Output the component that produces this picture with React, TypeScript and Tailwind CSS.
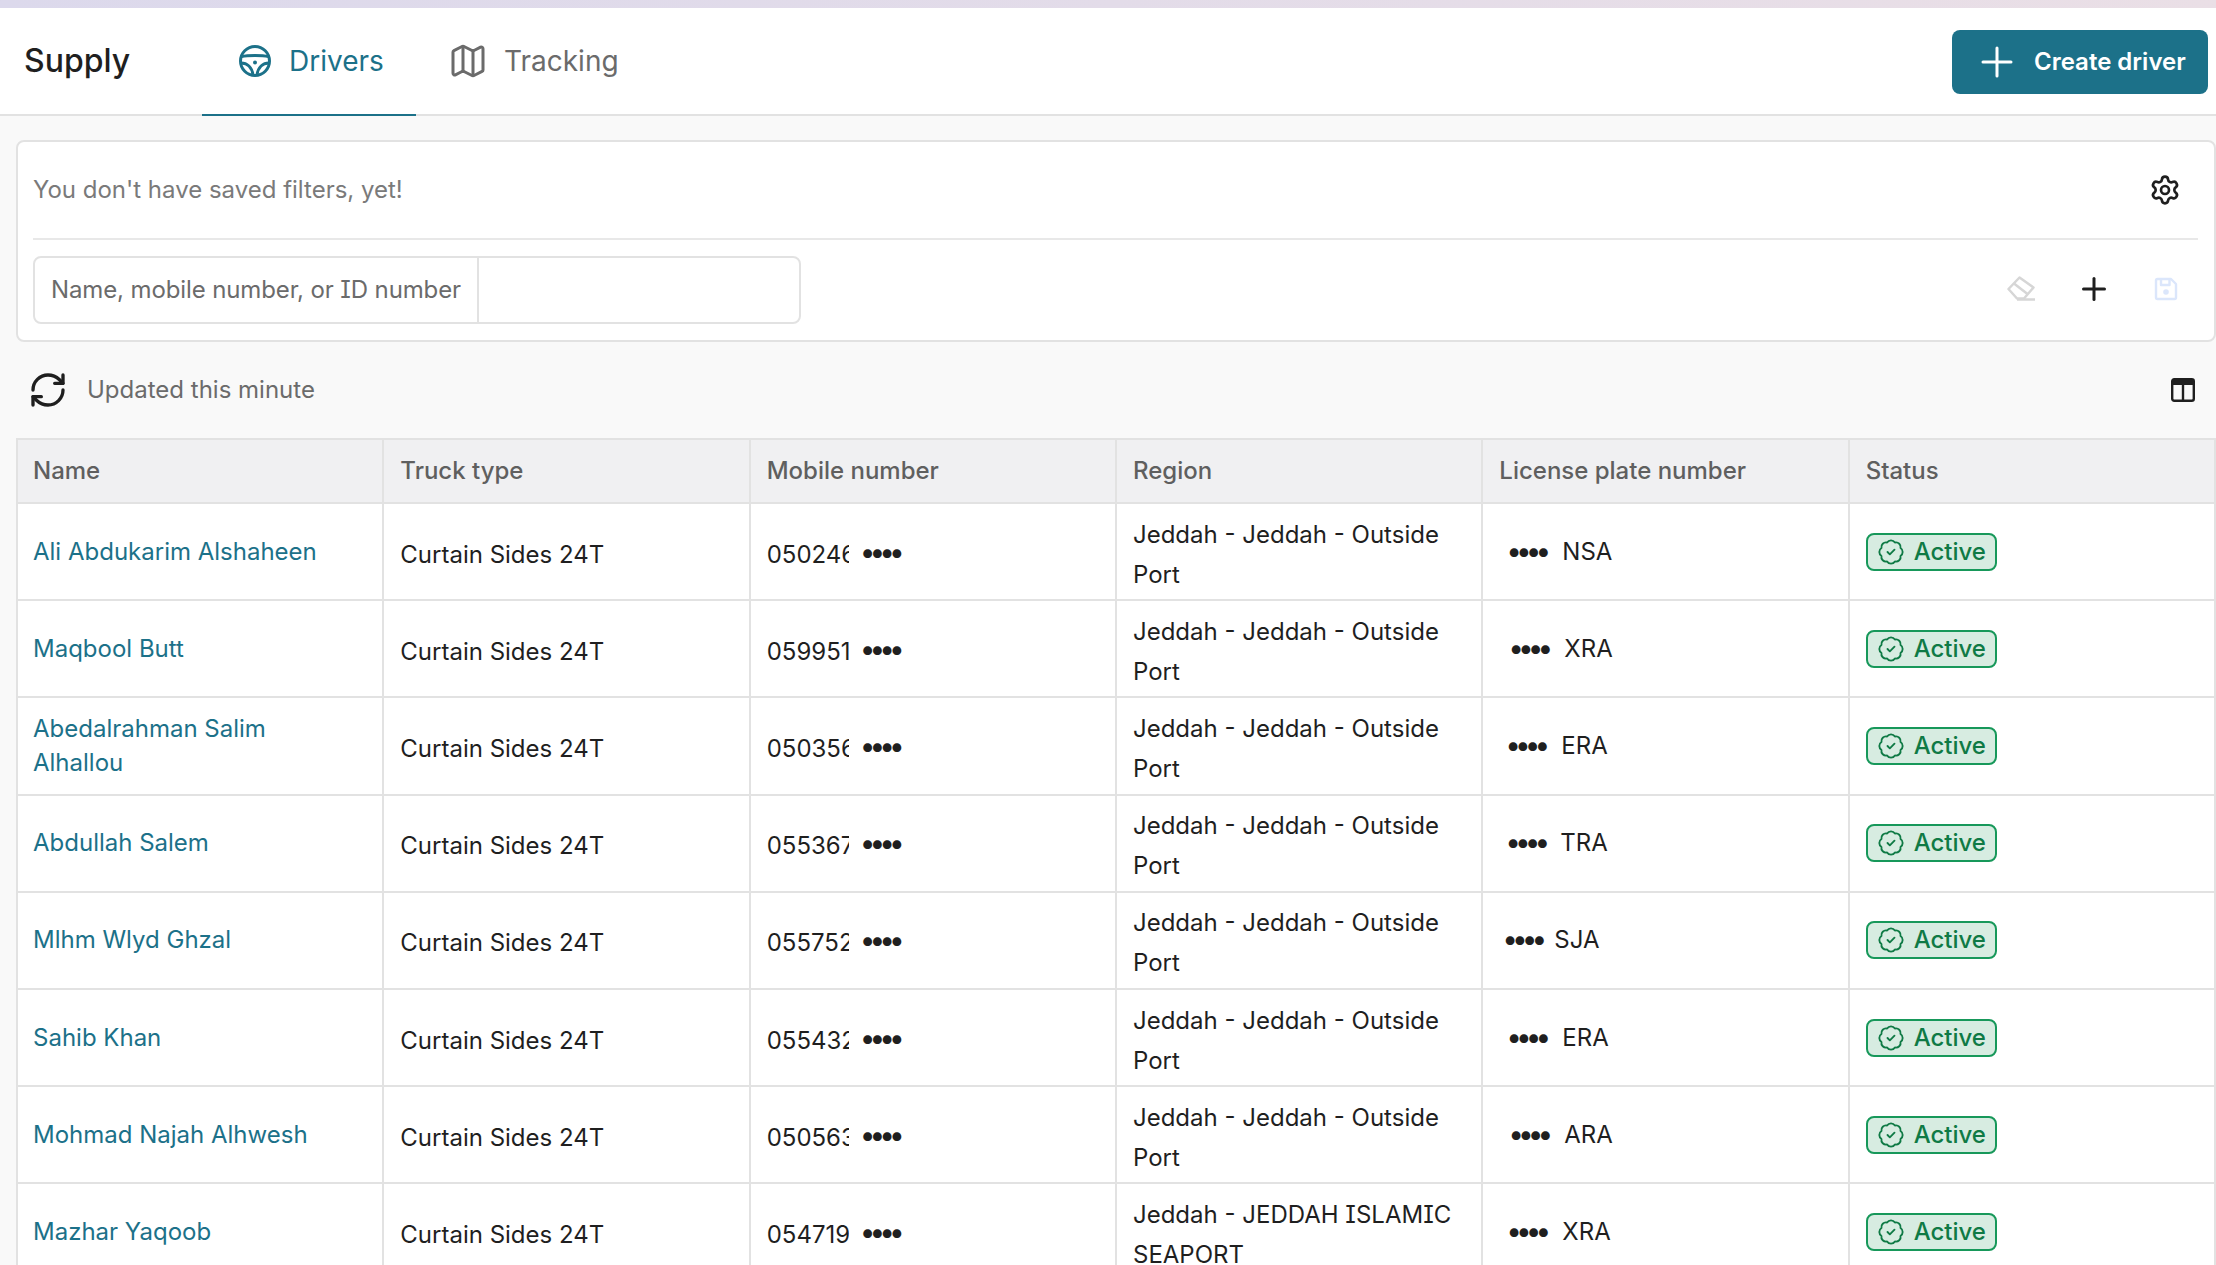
import { BadgeCheck, Map as MapIcon, Plus, RefreshCw, Settings } from "lucide-react";

const rows = [
  { name: "Ali Abdukarim Alshaheen", phone: "050246", plate: "NSA", dots: "pl-[7px]", gap: "ml-[17px]", region: "Jeddah - Jeddah - Outside Port" },
  { name: "Maqbool Butt", phone: "059951", plate: "XRA", dots: "pl-[9px]", gap: "ml-[17px]", region: "Jeddah - Jeddah - Outside Port" },
  { name: "Abedalrahman Salim Alhallou", phone: "050356", plate: "ERA", dots: "pl-[6px]", gap: "ml-[17px]", region: "Jeddah - Jeddah - Outside Port" },
  { name: "Abdullah Salem", phone: "055367", plate: "TRA", dots: "pl-[6px]", gap: "ml-[16px]", region: "Jeddah - Jeddah - Outside Port" },
  { name: "Mlhm Wlyd Ghzal", phone: "055752", plate: "SJA", dots: "pl-[3px]", gap: "ml-[13px]", region: "Jeddah - Jeddah - Outside Port" },
  { name: "Sahib Khan", phone: "055432", plate: "ERA", dots: "pl-[7px]", gap: "ml-[17px]", region: "Jeddah - Jeddah - Outside Port" },
  { name: "Mohmad Najah Alhwesh", phone: "050563", plate: "ARA", dots: "pl-[9px]", gap: "ml-[17px]", region: "Jeddah - Jeddah - Outside Port" },
  { name: "Mazhar Yaqoob", phone: "054719", plate: "XRA", dots: "pl-[7px]", gap: "ml-[17px]", region: "Jeddah - JEDDAH ISLAMIC SEAPORT" },
];
const heads = ["Name", "Truck type", "Mobile number", "Region", "License plate number", "Status"];

function Wheel() {
  return (
    <svg width="34" height="34" viewBox="0 0 34 34" fill="none" stroke="#1c7189" strokeWidth="3">
      <circle cx="17" cy="17" r="14.5" />
      <path d="M3.5 12.5 C10 11 24 11 30.5 12.5" />
      <path d="M3 19 C9 19 14 23 15 31 M31 19 C25 19 20 23 19 31" />
      <circle cx="17" cy="18.5" r="2" fill="#1c7189" stroke="none" />
    </svg>
  );
}

function Eraser() {
  return (
    <svg width="28" height="25" viewBox="0 0 28 25" fill="none" stroke="#d6d6d6" strokeWidth="2.5" strokeLinejoin="round">
      <path d="M1.5 13 L12.5 1.5 L26.5 11.5 L17 22.5 H10 Z" />
      <path d="M7 7.5 L20.5 18" />
      <path d="M10 23.5 H28" />
    </svg>
  );
}

function SaveIcon() {
  return (
    <svg width="24" height="24" viewBox="0 0 24 24" fill="none" stroke="#dbe6fb" strokeWidth="2.4" strokeLinejoin="round">
      <path d="M2 3.5 A1.5 1.5 0 0 1 3.5 2 H17 L22 7 V20.5 A1.5 1.5 0 0 1 20.5 22 H3.5 A1.5 1.5 0 0 1 2 20.5 Z" />
      <path d="M7 2 V8 H15.5 V2" />
      <circle cx="12" cy="15" r="2.8" fill="#dbe6fb" stroke="none" />
    </svg>
  );
}

function ColumnsIcon() {
  return (
    <svg width="24" height="24" viewBox="0 0 24 24" fill="none">
      <rect x="1.2" y="1.2" width="21.6" height="21.6" rx="2" stroke="#1f1f1f" strokeWidth="2.4" />
      <rect x="1.2" y="1.2" width="21.6" height="5.8" fill="#1f1f1f" />
      <path d="M12 6 V22" stroke="#1f1f1f" strokeWidth="2.4" />
    </svg>
  );
}

export default function App() {
  return (
    <div className="h-[1265px] overflow-hidden bg-[#f9f9f9] font-['Inter',sans-serif] text-[24px] [font-feature-settings:'cv08']">
      <div className="h-2 bg-gradient-to-r from-[#dcd9ec] to-[#eadfe6]" />
      <header className="relative flex h-[108px] items-start border-b-2 border-[#e2e2e2] bg-white">
        <div className="w-[202px] pl-6 pt-[33px] text-[32px] leading-[40px] font-medium text-[#1f1f1f]">Supply</div>
        <div className="relative -mb-[2px] flex h-[108px] w-[214px] items-center gap-[17px] border-b-2 border-[#1c7189] pl-9 text-[#1c7189]">
          <Wheel />
          <span className="text-[28px]">Drivers</span>
        </div>
        <div className="flex h-[106px] items-center gap-4 pl-8 text-[#6b6b6b]">
          <MapIcon size={40} strokeWidth={1.8} />
          <span className="text-[28px]">Tracking</span>
        </div>
        <button className="ml-auto mr-2 mt-[22px] flex h-[64px] w-[256px] items-center gap-[13px] rounded-lg bg-[#1c7189] pl-[21px] text-[24px] font-semibold text-white">
          <Plus size={48} strokeWidth={1.5} />
          Create driver
        </button>
      </header>

      <section className="ml-4 mt-6 h-[202px] rounded-lg border-2 border-[#e2e2e2] bg-white pl-[15px] pr-4">
        <div className="flex h-[98px] items-center justify-between border-b-2 border-[#e8e8e8] text-[#7a7a7a]">
          <span>You don't have saved filters, yet!</span>
          <Settings size={32} strokeWidth={2} className="mr-[17px] text-[#1f1f1f]" />
        </div>
        <div className="flex items-center pt-4">
          <div className="flex h-[68px] w-[768px] rounded-lg border-2 border-[#e2e2e2]">
            <div className="flex w-[444px] items-center border-r-2 border-[#e2e2e2] pl-[16px] tracking-[-0.12px] text-[#6b6b6b]">Name, mobile number, or ID number</div>
          </div>
          <div className="ml-auto mb-[3px] flex items-center">
            <Eraser />
            <Plus size={36} strokeWidth={2} className="ml-[41px] text-[#1f1f1f]" />
            <span className="ml-[42px] mr-[20px]"><SaveIcon /></span>
          </div>
        </div>
      </section>

      <div className="flex h-[96px] items-center justify-between pl-7 pr-[21px] text-[#6b6b6b]">
        <div className="flex items-center gap-[19px]">
          <RefreshCw size={40} strokeWidth={2} className="text-[#1f1f1f]" />
          <span>Updated this minute</span>
        </div>
        <span><ColumnsIcon /></span>
      </div>

      <table className="ml-4 w-[2200px] table-fixed border-collapse">
        <thead>
          <tr className="h-[64px] bg-[#f0f0f2] text-left text-[#5f5f5f]">
            {heads.map((h, i) => (
              <th key={h} className={`border-2 border-[#e2e2e2] font-medium ${i === 0 ? "pl-[15px]" : "pl-4"}`}>{h}</th>
            ))}
          </tr>
        </thead>
        <tbody className="bg-white text-[#1f1f1f]">
          {rows.map((r) => (
            <tr key={r.name} className="h-[97.2px]">
              <td className="border-2 border-[#e2e2e2] pl-[15px] pr-8 leading-[34px] text-[#1c7189]">{r.name}</td>
              <td className="border-2 border-[#e2e2e2] pl-4"><span className="relative top-[3px]">Curtain Sides 24T</span></td>
              <td className="border-2 border-[#e2e2e2] pl-4">
                <div className="relative top-[3px] flex items-center">
                  <span className="w-[82px] overflow-hidden">{r.phone}</span>
                  <span className="relative -top-[3px] ml-[11px] text-[28px] leading-none tracking-[-6px]">••••</span>
                </div>
              </td>
              <td className="border-2 border-[#e2e2e2] pl-4 pr-4 leading-[40px]"><div className="relative top-[3px]">{r.region}</div></td>
              <td className="border-2 border-[#e2e2e2] pl-4">
                <div className={`flex items-center ${r.dots}`}>
                  <span className="relative -top-[1px] text-[28px] leading-none tracking-[-6px]">••••</span>
                  <span className={r.gap}>{r.plate}</span>
                </div>
              </td>
              <td className="border-2 border-[#e2e2e2] pl-4">
                <div className="flex h-[38px] w-[131px] items-center gap-[9px] rounded-lg border-2 border-[#17985a] bg-[#d7ece1] pl-[9px] font-medium text-[#0f7a45]">
                  <BadgeCheck size={28} strokeWidth={1.6} />
                  Active
                </div>
              </td>
            </tr>
          ))}
        </tbody>
      </table>
    </div>
  );
}
